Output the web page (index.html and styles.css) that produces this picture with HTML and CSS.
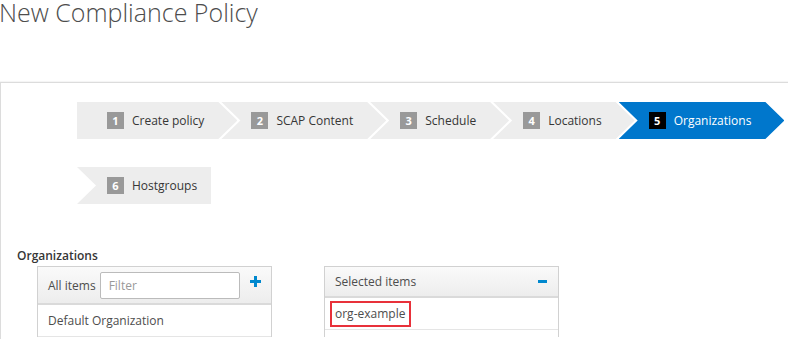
FILE: index.html
```html
<!DOCTYPE html>
<html lang="en">
<head>
  <meta charset="UTF-8">
  <meta name="viewport" content="width=device-width, initial-scale=1.0">
  <title>New Compliance Policy</title>
  <link rel="stylesheet" href="styles.css">
</head>
<body>

<h1 class="page-title">New Compliance Policy</h1>

<div class="panel">
  <ul class="wizard-steps">
    <li class="step first"><span class="badge">1</span>Create policy</li>
    <li class="step"><span class="badge">2</span>SCAP Content</li>
    <li class="step"><span class="badge">3</span>Schedule</li>
    <li class="step"><span class="badge">4</span>Locations</li>
    <li class="step active"><span class="badge">5</span>Organizations</li>
    <li class="step last"><span class="badge">6</span>Hostgroups</li>
  </ul>

  <div class="form-group">
    <label class="control-label">Organizations</label>
    <div class="dual-list">
      <div class="list-box">
        <div class="list-header">
          <span class="header-title">All items</span>
          <input type="text" class="filter" placeholder="Filter">
          <span class="icon-plus">
            <svg width="11" height="11" viewBox="0 0 11 11"><path d="M4 0h3v4h4v3H7v4H4V7H0V4h4z" fill="#0088ce"/></svg>
          </span>
        </div>
        <div class="list-item">Default Organization</div>
      </div>

      <div class="list-box">
        <div class="list-header selected">
          <span class="header-title">Selected items</span>
          <span class="icon-minus"></span>
        </div>
        <div class="list-item"><span class="highlight">org-example</span></div>
      </div>
    </div>
  </div>
</div>

</body>
</html>
```

FILE: styles.css
```css
body {
  font-family: "Open Sans", sans-serif;
  margin: 0;
  padding: 0;
  background-color: #fff;
  color: #363636;
  overflow: hidden;
}
.page-title {
  font-size: 25px;
  font-weight: 300;
  line-height: 30px;
  margin: -3px 0 0 -1px;
  color: #4d4d4d;
}
.panel {
  margin-top: 55px;
  width: 900px;
  height: 400px;
  border-top: 1px solid #dcdcdc;
  border-left: 1px solid #dcdcdc;
  box-shadow: 0 -1px 1px rgba(0, 0, 0, 0.04);
}
.wizard-steps {
  list-style: none;
  margin: 0;
  padding: 19px 0 0 76px;
  width: 724px;
  display: flex;
  flex-wrap: wrap;
  row-gap: 28px;
}
.step {
  display: flex;
  align-items: center;
  height: 37px;
  padding: 0 33px 0 30px;
  margin-right: -16px;
  background-color: #ededed;
  font-size: 12px;
  color: #363636;
  clip-path: polygon(0 0, calc(100% - 19px) 0, 100% 50%, calc(100% - 19px) 100%, 0 100%, 19px 50%);
}
.step.first {
  clip-path: polygon(0 0, calc(100% - 19px) 0, 100% 50%, calc(100% - 19px) 100%, 0 100%);
}
.step.last {
  padding-right: 14px;
  clip-path: polygon(0 0, 100% 0, 100% 100%, 0 100%, 19px 50%);
}
.step.active {
  background-color: #0077cc;
  color: #fff;
}
.badge {
  display: inline-block;
  width: 17px;
  height: 17px;
  line-height: 17px;
  margin-right: 8px;
  background-color: #999;
  color: #fff;
  font-size: 11px;
  font-weight: 700;
  text-align: center;
}
.step.active .badge {
  background-color: #000;
}
.form-group {
  padding: 43px 0 0 16px;
}
.control-label {
  display: block;
  font-size: 12px;
  font-weight: 600;
  line-height: 18px;
  margin-bottom: 1px;
}
.dual-list {
  display: flex;
  gap: 52px;
  padding-left: 20px;
}
.list-box {
  width: 233px;
  border: 1px solid #d1d1d1;
  border-bottom: none;
}
.list-header {
  display: flex;
  align-items: center;
  height: 36px;
  padding: 0 10px;
  background: linear-gradient(#fafafa, #ededed);
  border-bottom: 2px solid #dadada;
  font-size: 12px;
  color: #4d4d4d;
}
.list-header.selected {
  height: 29px;
}
.header-title {
  margin-right: 4px;
}
.filter {
  width: 140px;
  height: 27px;
  box-sizing: border-box;
  border: 1px solid #bbb;
  border-radius: 2px;
  padding: 0 8px;
  font-family: "Open Sans", sans-serif;
  font-size: 12px;
}
.filter::placeholder {
  color: #999;
}
.icon-plus {
  margin-left: auto;
  display: flex;
  padding-bottom: 8px;
}
.icon-minus {
  margin-left: auto;
  margin-right: 1px;
  width: 9px;
  height: 3px;
  background-color: #0088ce;
}
.list-item {
  height: 31px;
  display: flex;
  align-items: center;
  padding: 0 10px;
  border-bottom: 1px solid #e5e5e5;
  font-size: 12px;
  color: #4d4d4d;
}
.highlight {
  margin-left: -5px;
  padding: 2px 4px 3px 3px;
  border: 2px solid #e8313a;
}
```
